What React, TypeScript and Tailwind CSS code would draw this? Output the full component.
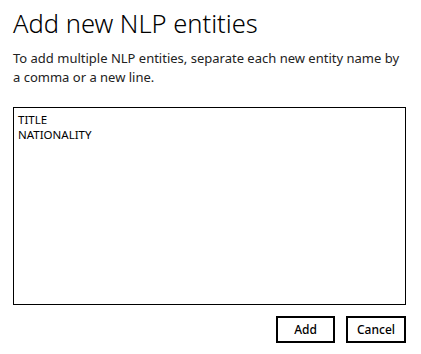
export default function App() {
  return (
    <div
      className="w-[421px] h-[354px] bg-white text-black pl-[13px] pr-[15px] pt-[5px]"
      style={{ fontFamily: '"Noto Sans", "Open Sans", sans-serif' }}
    >
      <h1 className="text-[25.5px] leading-[36px] font-light">Add new NLP entities</h1>
      <p className="mt-[8px] text-[13px] leading-[19px] text-[#222]">
        To add multiple NLP entities, separate each new entity name by a comma or a new line.
      </p>
      <textarea
        defaultValue={"TITLE\nNATIONALITY"}
        className="mt-[20px] block w-[393px] h-[198px] resize-none border border-black px-[4px] py-[4px] text-[11.5px] leading-[15px] outline-none"
      />
      <div className="mt-[11px] flex justify-end gap-[11px]">
        <button className="w-[59px] h-[27px] border-2 border-black text-[12px] font-medium">Add</button>
        <button className="w-[60px] h-[27px] border-2 border-black text-[12px] font-medium">Cancel</button>
      </div>
    </div>
  );
}
